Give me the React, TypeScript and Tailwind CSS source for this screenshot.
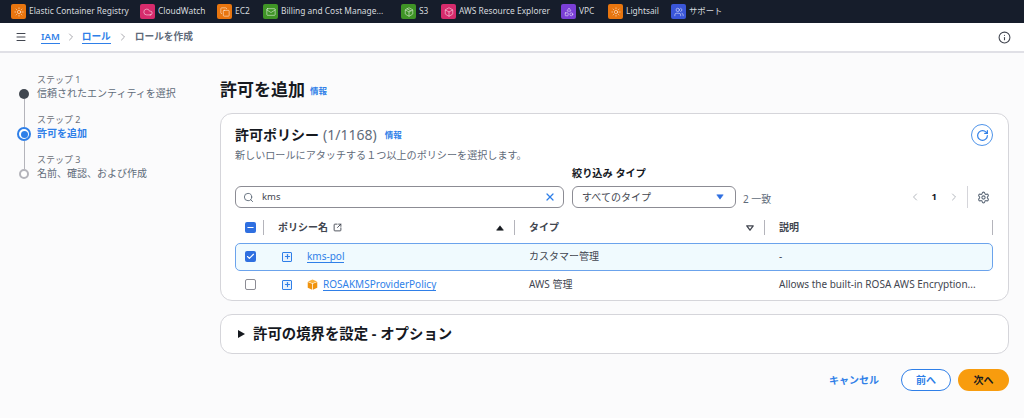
import {
  Box,
  Check,
  ChevronLeft,
  ChevronRight,
  Cloud,
  Copy,
  Info,
  Mail,
  Menu,
  Minus,
  Package,
  Plus,
  RotateCw,
  Search,
  Settings,
  Shapes,
  SquareArrowOutUpRight,
  Sun,
  Users,
  X,
  type LucideIcon,
} from 'lucide-react';

const FONT = 'font-["Noto_Sans","Noto_Sans_CJK_JP",sans-serif]';

interface Service {
  name: string;
  color: string;
  icon: LucideIcon;
  width: string;
}

const services: Service[] = [
  { name: 'Elastic Container Registry', color: 'bg-[#e8750f]', icon: Sun, width: 'w-[99px]' },
  { name: 'CloudWatch', color: 'bg-[#d62b6c]', icon: Cloud, width: 'w-[47px]' },
  { name: 'EC2', color: 'bg-[#e8750f]', icon: Copy, width: 'w-[16px]' },
  { name: 'Billing and Cost Manage...', color: 'bg-[#3f9426]', icon: Mail, width: 'w-[108px]' },
  { name: 'S3', color: 'bg-[#3f9426]', icon: Package, width: 'w-[10px]' },
  { name: 'AWS Resource Explorer', color: 'bg-[#d62b6c]', icon: Box, width: 'w-[90px]' },
  { name: 'VPC', color: 'bg-[#7a3fd6]', icon: Shapes, width: 'w-[17px]' },
  { name: 'Lightsail', color: 'bg-[#e8750f]', icon: Sun, width: 'w-[33px]' },
  { name: 'サポート', color: 'bg-[#3a56d8]', icon: Users, width: 'w-[34px]' },
];

function TopBar() {
  return (
    <div className="flex h-[23px] items-center gap-[12px] bg-[#161d2b] pl-[11px]">
      {services.map((s) => (
        <div key={s.name} className="flex items-center gap-[3px]">
          <span className={`flex size-[15px] items-center justify-center rounded-[2px] ${s.color}`}>
            <s.icon className="size-[10px] text-white/80" strokeWidth={1.5} />
          </span>
          <span className={`whitespace-nowrap text-[8.4px] text-[#d5d9de] ${s.width}`}>{s.name}</span>
        </div>
      ))}
    </div>
  );
}

function Crumbs() {
  return (
    <div className="flex h-[30px] items-center border-b-2 border-[#e0e0e6] bg-white pr-[13px] pl-[15px]">
      <Menu className="size-[12px] text-[#424650]" strokeWidth={2} />
      <a className="ml-[14px] border-b border-[#2f7fe8] text-[9.5px] font-semibold leading-[13px] text-[#2f7fe8]">IAM</a>
      <ChevronRight className="mx-[5px] size-[12px] text-[#8c8c94]" strokeWidth={1.5} />
      <a className="border-b border-[#2f7fe8] text-[9.7px] font-semibold leading-[13px] text-[#2f7fe8]">ロール</a>
      <ChevronRight className="mx-[6px] size-[12px] text-[#8c8c94]" strokeWidth={1.5} />
      <span className="text-[9.7px] font-semibold text-[#5f6b7a]">ロールを作成</span>
      <Info className="ml-auto size-[13px] text-[#424650]" strokeWidth={2} />
    </div>
  );
}

function Step({ label, title, state }: { label: string; title: string; state: 'done' | 'active' | 'todo' }) {
  return (
    <div className="flex h-[40px] gap-[6px]">
      <div className="flex w-[14px] flex-col items-center">
        <span className={`w-px flex-1 ${state === 'done' ? 'bg-transparent' : 'bg-[#b4b4bb]'}`} />
        {state === 'done' && <span className="size-[10px] rounded-full bg-[#414750]" />}
        {state === 'active' && (
          <span className="flex size-[14px] items-center justify-center rounded-full border-2 border-[#2f7fe8] bg-white">
            <span className="size-[7px] rounded-full bg-[#2f7fe8]" />
          </span>
        )}
        {state === 'todo' && <span className="size-[10px] rounded-full border-2 border-[#b4b4bb] bg-white" />}
        <span className={`w-px flex-1 ${state === 'todo' ? 'bg-transparent' : 'bg-[#b4b4bb]'}`} />
      </div>
      <div>
        <div className="text-[9px] leading-[12px] text-[#6b6f78]">{label}</div>
        <div className={`whitespace-nowrap text-[10px] leading-[14px] ${state === 'active' ? 'font-bold text-[#2f7fe8]' : 'text-[#5f6b7a]'}`}>
          {title}
        </div>
      </div>
    </div>
  );
}

function Sidebar() {
  return (
    <div className="w-[220px] shrink-0 pt-[21px] pl-[17px]">
      <Step label="ステップ 1" title="信頼されたエンティティを選択" state="done" />
      <Step label="ステップ 2" title="許可を追加" state="active" />
      <Step label="ステップ 3" title="名前、確認、および作成" state="todo" />
    </div>
  );
}

function InfoLink({ className }: { className: string }) {
  return <a className={`text-[8.5px] font-bold text-[#2f7fe8] ${className}`}>情報</a>;
}

function CheckBox({ kind }: { kind: 'minus' | 'check' | 'off' }) {
  if (kind === 'off') return <span className="block size-[11px] rounded-[2px] border border-[#8c8c94] bg-white" />;
  return (
    <span className="flex size-[11px] items-center justify-center rounded-[2px] bg-[#2f6fe0]">
      {kind === 'minus' ? (
        <Minus className="size-[9px] text-white" strokeWidth={3} />
      ) : (
        <Check className="size-[9px] text-white" strokeWidth={3} />
      )}
    </span>
  );
}

function ExpandIcon() {
  return (
    <span className="flex size-[10px] items-center justify-center rounded-[1px] border border-[#2f7fe8] bg-[#e8f2fd]">
      <Plus className="size-[7px] text-[#2f7fe8]" strokeWidth={4} />
    </span>
  );
}

function CubeIcon() {
  return (
    <svg viewBox="0 0 12 12" className="mr-[5px] size-[11px] shrink-0">
      <path d="M6 0.5 11 2.7 6 4.6 1 2.7Z" fill="#f9b13a" />
      <path d="M0.8 3.4 5.6 5.3V11.6L0.8 9.5Z" fill="#f0930e" />
      <path d="M11.2 3.4 6.4 5.3V11.6L11.2 9.5Z" fill="#f0930e" />
    </svg>
  );
}

function Triangle({ dir, hollow, color }: { dir: 'up' | 'down'; hollow?: boolean; color: string }) {
  const d = dir === 'up' ? 'M4 0.8 7.4 5.2H0.6Z' : 'M0.8 0.8H7.2L4 5.2Z';
  return (
    <svg viewBox="0 0 8 6" className="h-[6px] w-[8px] shrink-0">
      <path d={d} fill={hollow ? 'none' : color} stroke={color} strokeWidth={hollow ? 1.3 : 0.6} strokeLinejoin="round" />
    </svg>
  );
}

function Divider() {
  return <span className="h-[15px] w-px bg-[#b4b4bb]" />;
}

function PolicyTable() {
  const cols = 'grid grid-cols-[29px_251px_250px_228px]';
  return (
    <div className="mt-[9px] mr-[15px] ml-[14px]">
      <div className={`${cols} h-[21px] items-center text-[10px] font-bold text-[#424650]`}>
        <div className="flex items-center justify-between pl-[10px]">
          <CheckBox kind="minus" />
          <Divider />
        </div>
        <div className="flex items-center pl-[14px]">
          ポリシー名
          <SquareArrowOutUpRight className="ml-[5px] size-[9px]" strokeWidth={2.4} />
          <span className="mr-[10px] ml-auto">
            <Triangle dir="up" color="#16191f" />
          </span>
          <Divider />
        </div>
        <div className="flex items-center pl-[14px]">
          タイプ
          <span className="mr-[10px] ml-auto">
            <Triangle dir="down" hollow color="#424650" />
          </span>
          <Divider />
        </div>
        <div className="flex items-center justify-between pl-[14px]">
          説明
          <Divider />
        </div>
      </div>
      <div className={`${cols} mt-[5px] h-[28px] items-center rounded-[5px] border-[1.5px] border-[#6ba3ec] bg-[#f0fafe] pb-px text-[10px] text-[#424650]`}>
        <div className="pl-[9px]">
          <CheckBox kind="check" />
        </div>
        <div className="flex items-center pl-[17px]">
          <ExpandIcon />
          <a className="ml-[15px] border-b border-[#2f7fe8] leading-[12px] text-[#2f7fe8]">kms-pol</a>
        </div>
        <div className="pl-[13px]">カスタマー管理</div>
        <div className="pl-[13px]">-</div>
      </div>
      <div className={`${cols} h-[27px] items-center text-[10px] text-[#424650]`}>
        <div className="pl-[10px]">
          <CheckBox kind="off" />
        </div>
        <div className="flex items-center pl-[18px]">
          <ExpandIcon />
          <span className="ml-[15px]"></span>
          <CubeIcon />
          <a className="border-b border-[#2f7fe8] leading-[12px] text-[#2f7fe8]">ROSAKMSProviderPolicy</a>
        </div>
        <div className="pl-[14px]">AWS 管理</div>
        <div className="whitespace-nowrap pl-[14px]">Allows the built-in ROSA AWS Encryption...</div>
      </div>
    </div>
  );
}

function PolicyCard() {
  return (
    <div className="mt-[12px] h-[188px] rounded-[12px] border border-[#d5d5da] bg-white">
      <div className="flex items-start justify-between pr-[15px] pl-[14px] pt-[10px]">
        <div>
          <div className="mt-px flex items-center text-[14px] leading-[20px]">
            <span className="font-bold text-[#16191f]">許可ポリシー</span>
            <span className="ml-[4px] text-[#5f6b7a]">(1/1168)</span>
            <InfoLink className="ml-[8px]" />
          </div>
          <div className="mt-[2px] text-[10.1px] leading-[16px] text-[#5f6b7a]">新しいロールにアタッチする１つ以上のポリシーを選択します。</div>
        </div>
        <button className="flex size-[22px] items-center justify-center rounded-full border-[1.5px] border-[#4f94ea] bg-white">
          <RotateCw className="size-[13px] text-[#2f7fe8]" strokeWidth={2.2} />
        </button>
      </div>
      <div className="mt-[1px] flex items-end pr-[15px] pl-[14px]">
        <div className="flex h-[22px] w-[329px] items-center rounded-[6px] border border-[#8c8c94] bg-white px-[7px]">
          <Search className="size-[11px] text-[#5f6b7a]" strokeWidth={2} />
          <span className="ml-[8px] text-[9.5px] text-[#424650]">kms</span>
          <X className="ml-auto size-[12px] text-[#2f7fe8]" strokeWidth={2.5} />
        </div>
        <div className="ml-[8px]">
          <div className="mb-[4px] text-[10.2px] font-bold leading-[18px] text-[#16191f]">絞り込み タイプ</div>
          <div className="flex h-[22px] w-[164px] items-center justify-between rounded-[6px] border border-[#8c8c94] bg-white pr-[11px] pl-[9px] text-[10px] text-[#424650]">
            すべてのタイプ
            <Triangle dir="down" color="#2f6fe0" />
          </div>
        </div>
        <span className="ml-[7px] text-[10px] leading-[18px] text-[#5f6b7a]">2 一致</span>
        <div className="ml-auto flex h-[22px] items-center">
          <ChevronLeft className="size-[12px] text-[#9ba0a8]" strokeWidth={1.5} />
          <span className="mx-[11px] text-[9.5px] font-bold text-[#16191f]">1</span>
          <ChevronRight className="size-[12px] text-[#9ba0a8]" strokeWidth={1.5} />
          <span className="mr-[9px] ml-[7px] h-[22px] w-px bg-[#d5d5da]" />
          <Settings className="size-[13px] text-[#5f6b7a]" strokeWidth={2} />
          <span className="w-[3px]" />
        </div>
      </div>
      <PolicyTable />
    </div>
  );
}

export default function App() {
  return (
    <div className={`h-[418px] w-[1024px] overflow-hidden bg-[#fbfbfc] ${FONT}`}>
      <TopBar />
      <Crumbs />
      <div className="flex">
        <Sidebar />
        <div className="w-[789px] pt-[26px]">
          <div className="flex h-[22px] items-center">
            <h1 className="text-[17px] font-bold text-[#16191f]">許可を追加</h1>
            <InfoLink className="ml-[5px] mt-[3px]" />
          </div>
          <PolicyCard />
          <div className="mt-[13px] flex h-[40px] items-center rounded-[12px] border border-[#d5d5da] bg-white pb-px pl-[17px]">
            <span className="border-y-[4px] border-l-[7px] border-y-transparent border-l-[#16191f]" />
            <span className="ml-[8px] text-[14.4px] font-bold text-[#16191f]">許可の境界を設定 - オプション</span>
          </div>
          <div className="mt-[15px] flex items-center justify-end">
            <a className="mr-[22px] text-[10px] font-bold text-[#2f7fe8]">キャンセル</a>
            <button className="h-[22px] w-[50px] rounded-full border border-[#2f7fe8] bg-white text-[10px] font-bold text-[#2f7fe8]">前へ</button>
            <button className="ml-[7px] h-[22px] w-[51px] rounded-full bg-[#f89c0e] text-[10px] font-bold text-[#16191f]">次へ</button>
          </div>
        </div>
      </div>
    </div>
  );
}
